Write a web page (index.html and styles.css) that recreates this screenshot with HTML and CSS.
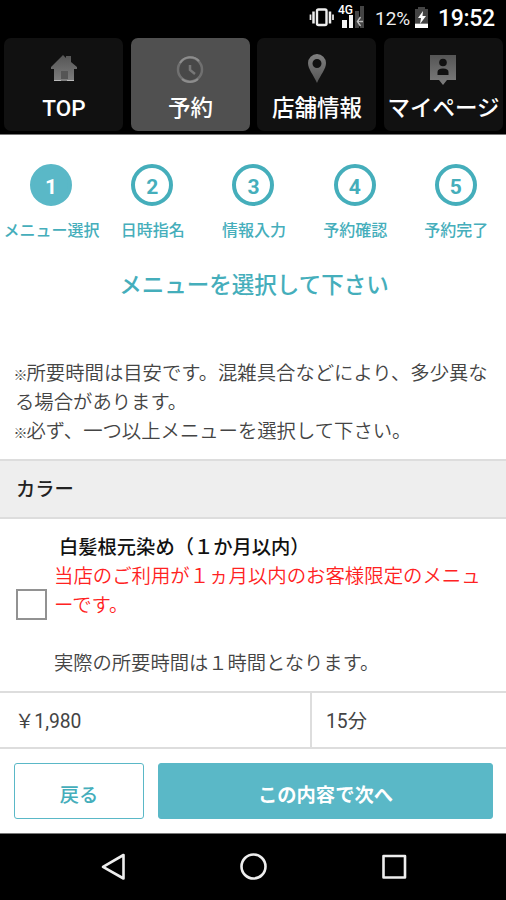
FILE: index.html
```html
<!DOCTYPE html>
<html lang="ja">
<head>
<meta charset="utf-8">
<title>メニュー選択</title>
<link rel="stylesheet" href="styles.css">
</head>
<body>
<header class="status">
  <svg class="status-icons" width="64" height="30" viewBox="0 0 64 30">
    <g fill="none" stroke="#eee">
      <rect x="10" y="6.500" width="9.500" height="15.500" rx="1.500" stroke-width="2.400"/>
      <path d="M6.500 8.500v12M23 8.500v12" stroke-width="2.500"/>
      <path d="M3.500 11.500v5.500M26 11.500v5.500" stroke-width="1.700"/>
    </g>
    <path d="M35 17h5v8h-5zM42 12h4v13h-4z" fill="#f4f4f4"/>
    <path d="M48 8h4v17h-4zM53 3h4v22h-4z" fill="#444"/>
    <path d="M53.500 14l-3 4.500 3 4.500M50 18.500h6" fill="none" stroke="#bbb" stroke-width="1.500"/>
    <text class="network" x="31" y="11">4G</text>
  </svg>
  <span class="percent">12%</span>
  <svg class="battery" width="15" height="22" viewBox="0 0 15 22">
    <path d="M4 2V0h7v2h3v14H1V2z" fill="#444"/>
    <path d="M1 16.500h13V21H1z" fill="#fff"/>
    <path d="M9 4L4 11h3l-1 6 6-8H8.500z" fill="#fff"/>
  </svg>
  <span class="clock">19:52</span>
</header>
<nav class="tabs">
  <a class="tab">
    <svg width="28" height="32" viewBox="0 0 28 32"><defs><linearGradient id="metal" x2="0" y2="1"><stop stop-color="#555"/><stop offset="1" stop-color="#7d7d7d"/></linearGradient><linearGradient id="metal-down" x2="0" y2="1"><stop stop-color="#808080"/><stop offset="1" stop-color="#555"/></linearGradient></defs>
      <path d="M1 14L13 2l3 3V3h5v6l6 5v2h-3v12H4V16H1z" fill="url(#metal)"/><path d="M11 18h7v8h-7z" fill="#555"/><path d="M4 27.500h7M17 27.500h7" stroke="#bbb"/></svg>
    <span>TOP</span>
  </a>
  <a class="tab active">
    <svg width="28" height="32" viewBox="0 0 28 32"><circle cx="14" cy="16.500" r="12" fill="#484848" stroke="#707070" stroke-width="2.500"/><path d="M4 10a12 12 0 0 1 19-2M6 26a12 12 0 0 0 16 0" fill="none" stroke="#8d8d8d" stroke-width="2"/><path d="M14 12v5l5 4" fill="none" stroke="#777" stroke-width="2.500"/></svg>
    <span>予約</span>
  </a>
  <a class="tab">
    <svg width="28" height="32" viewBox="0 0 28 32"><path fill-rule="evenodd" d="M14 1a9 9 0 0 1 9 9c0 6-5 11-9 20C10 21 5 16 5 10a9 9 0 0 1 9-9zm0 5a4.500 4.500 0 1 0 0 9 4.500 4.500 0 0 0 0-9z" fill="url(#metal-down)"/></svg>
    <span>店舗情報</span>
  </a>
  <a class="tab">
    <svg width="28" height="32" viewBox="0 0 28 32"><path d="M1 2h26v25H18l-4 5-4-5H1z" fill="url(#metal)"/><circle cx="14" cy="9.500" r="3.800" fill="#111"/><path d="M8.500 22v-3q0-3.500 5.500-3.500t5.500 3.500v3z" fill="#111"/></svg>
    <span>マイページ</span>
  </a>
</nav>
<main>
  <ol class="steps">
    <li class="current"><b>1</b><span>メニュー選択</span></li>
    <li><b>2</b><span>日時指名</span></li>
    <li><b>3</b><span>情報入力</span></li>
    <li><b>4</b><span>予約確認</span></li>
    <li><b>5</b><span>予約完了</span></li>
  </ol>
  <h1>メニューを選択して下さい</h1>
  <p class="notes"><span class="mark">※</span>所要時間は目安です。混雑具合などにより、多少異な<br>る場合があります。<br><span class="mark">※</span>必ず、一つ以上メニューを選択して下さい。</p>
  <h2>カラー</h2>
  <label class="item">
    <input type="checkbox">
    <span class="description">
      <strong>白髪根元染め（１か月以内）</strong>
      <em>当店のご利用が１ヵ月以内のお客様限定のメニュ<br>ーです。</em>
      <span class="duration">実際の所要時間は１時間となります。</span>
    </span>
  </label>
  <div class="details"><div class="price"><span class="yen">￥</span>1,980</div><div class="time">15分</div></div>
  <div class="actions"><button class="back">戻る</button><button class="next">この内容で次へ</button></div>
</main>
<footer class="system">
  <svg width="506" height="66" viewBox="0 0 506 66" fill="none" stroke="#eee" stroke-width="2.600" stroke-linejoin="round"><path d="M123.500 21v23.500L103 32.800z"/><circle cx="253.500" cy="32.500" r="12"/><rect x="383.500" y="22" width="21.500" height="21.500"/></svg>
</footer>
</body>
</html>
```
FILE: styles.css
```css
* { box-sizing: border-box; }
body {
  margin: 0;
  width: 506px;
  height: 900px;
  overflow: hidden;
  display: flex;
  flex-direction: column;
  background: #fff;
  color: #444;
  font-family: Roboto, "Noto Sans CJK JP", sans-serif;
  font-size: 19.3px;
  line-height: 29px;
}
.status {
  height: 36px;
  flex: none;
  display: flex;
  align-items: center;
  background: #000;
  color: #fff;
  padding-left: 307px;
}
.status-icons { flex: none; }
.network { font-size: 12px; font-weight: 500; fill: #fff; }
.percent { margin-left: 4px; width: 38px; font-size: 19px; color: #eee; }
.battery { margin: 0 9px 0 1px; }
.clock { font-size: 23px; font-weight: 500; letter-spacing: -0.3px; }
.tabs {
  height: 99px;
  flex: none;
  display: grid;
  grid-template-columns: repeat(4, 119px);
  gap: 7.5px;
  padding: 2px 4px 3px;
  background: #000;
  border-bottom: 1px solid #777;
}
.tab {
  display: flex;
  flex-direction: column;
  align-items: center;
  padding-top: 15px;
  border-radius: 7px;
  background: #111;
  color: #fff;
  font-size: 22.5px;
  font-weight: 500;
  white-space: nowrap;
}
.tab svg { width: 28px; height: 32px; flex: none; }
.tab span { margin: 9px 0 0 1px; }
.active { background: #505050; }
main { flex: 1; }
.steps {
  list-style: none;
  margin: 0;
  padding: 29px 0 0 0.500px;
  display: grid;
  grid-template-columns: repeat(5, 101.2px);
  color: #45aebb;
}
.steps li { display: flex; flex-direction: column; align-items: center; }
.steps b {
  width: 42px;
  height: 42px;
  border: 4px solid #45aebb;
  border-radius: 50%;
  text-align: center;
  line-height: 38px;
  font-size: 21px;
  font-weight: 700;
}
.steps .current b { background: #5ab8c7; border-color: #5ab8c7; color: #fff; }
.steps span { margin: 10px 0 0 1px; font-size: 16px; font-weight: 500; white-space: nowrap; }
h1 {
  margin: 25px 0 0 2px;
  text-align: center;
  color: #45aebb;
  font-size: 22.5px;
  font-weight: 500;
  line-height: 30px;
}
.notes { margin: 59px 0 0; padding-left: 15px; font-size: 19.35px; font-weight: 350; white-space: nowrap; }
.mark { display: inline-block; width: 11.5px; font-size: 14px; line-height: 14px; text-indent: -1.5px; }
h2 {
  margin: 13px 0 0;
  height: 60px;
  padding: 14px 16px 0;
  border: solid #ddd;
  border-width: 2px 0;
  background: #eee;
  color: #222;
  font-size: 19.3px;
  font-weight: 500;
}
.item { height: 172px; display: flex; align-items: center; padding-left: 16px; }
.item input {
  appearance: none;
  width: 31px;
  height: 31px;
  flex: none;
  margin: 0 0 2px;
  border: 2px solid #929292;
}
.description { margin-left: 7px; white-space: nowrap; }
.description > * { display: block; }
strong { padding-left: 5px; color: #111; font-weight: 500; }
em { color: #f22; font-size: 19.4px; font-style: normal; font-weight: 350; }
.duration { margin-top: 29px; font-weight: 350; }
.details {
  display: grid;
  grid-template-columns: 310px 1fr;
  height: 58px;
  border: solid #ddd;
  border-width: 2px 0;
  line-height: 57px;
}
.details > div { height: 54px; }
.price { padding-left: 15px; }
.yen { display: inline-block; width: 19.3px; }
.time { padding-left: 14px; border-left: 2px solid #ddd; }
.actions { display: grid; grid-template-columns: 130px 335px; gap: 14px; padding: 14px 14px 0; }
.actions button {
  height: 56px;
  padding: 9px 0 0;
  border: 1px solid #5ab8c7;
  border-radius: 3px;
  font: 500 19.3px/29px Roboto, "Noto Sans CJK JP", sans-serif;
}
.actions .back { background: #fff; color: #45aebb; }
.actions .next { background: #5ab8c7; color: #fff; font-weight: 700; }
.system { height: 67px; flex: none; background: #000; border-top: 1px solid #777; }
.system svg { display: block; }
```
